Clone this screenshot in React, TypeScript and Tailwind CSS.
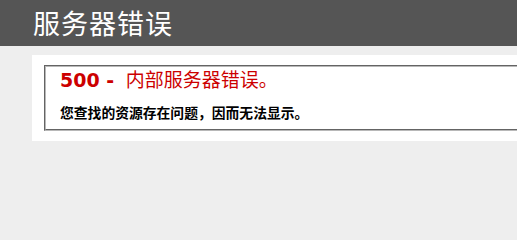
export default function App() {
  return (
    <div className="min-h-screen w-full overflow-hidden bg-[#eeeeee] font-['DejaVu_Sans','Noto_Sans_CJK_SC',sans-serif] text-[11.2px]">
      {/* header */}
      <div className="h-[46px] bg-[#555555] pl-[33px] pt-[6px]">
        <h1 className="font-['Noto_Sans_CJK_SC',sans-serif] text-[27px] leading-[34px] font-normal tracking-[1px] text-white">
          服务器错误
        </h1>
      </div>

      {/* content */}
      <div className="-mr-[60px] ml-[32px] mt-[9px] bg-white py-[10px] pl-[12px] pr-[10px]">
        <fieldset className="border-2 border-[#b8b8b8] pb-[8px] pl-[14px] pr-[15px] [border-style:groove]">
          <h2 className="m-0 text-[19px] leading-[23px] text-[#cc0000]">
            <span className="font-['DejaVu_Sans',sans-serif] font-bold">500 - </span>
            <span className="ml-[5px] font-['Noto_Sans_CJK_SC',sans-serif] font-normal">内部服务器错误。</span>
          </h2>
          <h3 className="mt-[12px] font-['Noto_Sans_CJK_SC',sans-serif] text-[13.8px] leading-[17px] font-bold text-black">
            您查找的资源存在问题，因而无法显示。
          </h3>
        </fieldset>
      </div>
    </div>
  );
}
